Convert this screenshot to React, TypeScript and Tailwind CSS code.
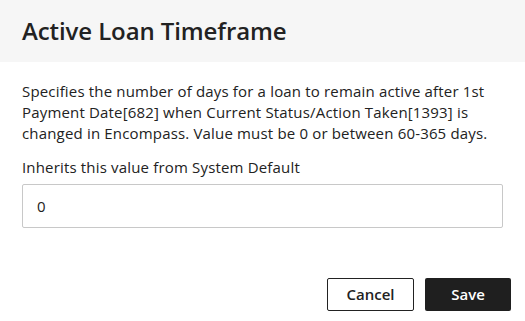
export default function App() {
  return (
    <div className="w-[525px] h-[321px] bg-white flex flex-col text-[#222]" style={{ fontFamily: '"Open Sans", sans-serif' }}>
      <div className="h-[62px] bg-[#f6f6f6] flex items-center px-[22px]">
        <h1 className="text-[24px] font-semibold text-[#222] leading-none tracking-[-0.1px]">Active Loan Timeframe</h1>
      </div>
      <div className="px-[22px] pt-[19px] flex flex-col tracking-[0.17px]">
        <p className="text-[15px] leading-[21px] text-[#222]">
          Specifies the number of days for a loan to remain active after 1st Payment Date[682] when Current Status/Action Taken[1393] is changed in Encompass. Value must be 0 or between 60-365 days.
        </p>
        <label className="mt-[13px] text-[15px] leading-[21px] text-[#222]">Inherits this value from System Default</label>
        <div className="mt-[6px] h-[44px] border border-[#c8c8c8] rounded-[2px] flex items-center px-[14px] text-[15px]">0</div>
      </div>
      <div className="flex justify-end gap-[11px] px-[14px] mt-[50px]">
        <button className="w-[87px] h-[33px] border border-[#222] rounded-[2px] bg-white text-[15px] font-semibold text-[#222]">Cancel</button>
        <button className="w-[86px] h-[33px] rounded-[2px] bg-[#1f1f1f] text-[15px] font-semibold text-white">Save</button>
      </div>
    </div>
  );
}
